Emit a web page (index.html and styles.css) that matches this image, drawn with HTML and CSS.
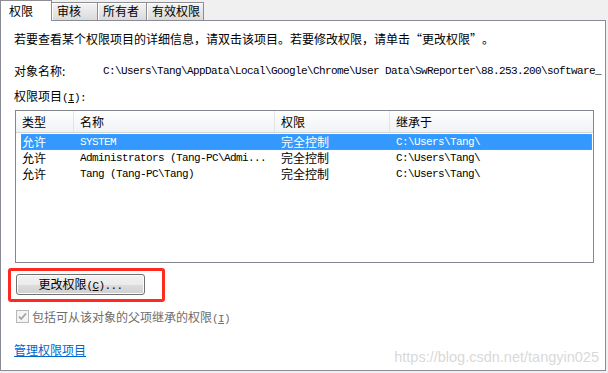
FILE: index.html
```html
<!DOCTYPE html>
<html lang="zh-CN">
<head>
  <meta charset="UTF-8" />
  <title>权限</title>
  <link rel="stylesheet" href="styles.css">
</head>
<body>
  <div class="tabs">
    <div class="tab active">权限</div>
    <div class="tab t-audit">审核</div>
    <div class="tab t-owner">所有者</div>
    <div class="tab t-eff">有效权限</div>
  </div>
  <div class="panel">
    <p class="intro">若要查看某个权限项目的详细信息，请双击该项目。若要修改权限，请单击<span class="q">“</span>更改权限<span class="q">”</span>。</p>
    <div class="objname">
      <span class="objlabel">对象名称:</span>
      <span class="mono path">C:\Users\Tang\AppData\Local\Google\Chrome\User Data\SwReporter\88.253.200\software_</span>
    </div>
    <div class="items-label">权限项目<span class="mono">(<u>I</u>):</span></div>

    <div class="listbox">
      <div class="lv-head">
        <div class="col">类型</div>
        <div class="col">名称</div>
        <div class="col">权限</div>
        <div class="col">继承于</div>
      </div>
      <div class="lv-row selected">
        <div class="cell first">允许</div>
        <div class="cell mono">SYSTEM</div>
        <div class="cell">完全控制</div>
        <div class="cell mono">C:\Users\Tang\</div>
      </div>
      <div class="lv-row">
        <div class="cell first">允许</div>
        <div class="cell mono">Administrators (Tang-PC\Admi...</div>
        <div class="cell">完全控制</div>
        <div class="cell mono">C:\Users\Tang\</div>
      </div>
      <div class="lv-row">
        <div class="cell first">允许</div>
        <div class="cell mono">Tang (Tang-PC\Tang)</div>
        <div class="cell">完全控制</div>
        <div class="cell mono">C:\Users\Tang\</div>
      </div>
    </div>

    <div class="highlight">
      <button class="btn">更改权限<span class="mono">(<u>C</u>)...</span></button>
    </div>

    <div class="inherit">
      <svg class="check" width="13" height="13" viewBox="0 0 13 13">
        <rect x="0.5" y="0.5" width="12" height="12" fill="#f4f4f4" stroke="#b8b8b8"/>
        <path d="M3 6.5 L5.2 9 L10 3.5" fill="none" stroke="#a2a2a2" stroke-width="1.8"/>
      </svg>
      <span>包括可从该对象的父项继承的权限<span class="mono">(<u>I</u>)</span></span>
    </div>

    <a class="manage" href="#">管理权限项目</a>

    <div class="watermark">https://blog.csdn.net/tangyin025</div>
  </div>
</body>
</html>
```

FILE: styles.css
```css
body {
  margin: 0;
  background: #f0f0f0;
  font-family: "Noto Sans CJK SC", sans-serif;
  font-size: 12px;
  color: #000;
}
u {
  text-decoration: underline;
}
.mono {
  font-family: "Liberation Mono", "Noto Sans CJK SC", monospace;
  font-size: 11px;
  letter-spacing: -0.6px;
}
.q {
  display: inline-block;
  width: 12px;
  text-align: center;
}

/* tabs */
.tabs {
  display: flex;
  align-items: flex-end;
  height: 20px;
}
.tab {
  box-sizing: border-box;
  height: 18px;
  line-height: 16px;
  padding-left: 5px;
  border: 1px solid #8c8e94;
  border-bottom: none;
  border-left: none;
  background: linear-gradient(#f4f4f4, #e6e6e6 55%, #dadada);
  box-shadow: inset 1px 1px 0 #ffffff;
}
.tab.active {
  position: relative;
  z-index: 1;
  height: 21px;
  margin-bottom: -1px;
  width: 52px;
  padding-left: 8px;
  line-height: 20px;
  border-left: 1px solid #898c95;
  background: #fff;
  box-shadow: none;
}
.t-audit { width: 46px; }
.t-owner { width: 49px; }
.t-eff { width: 57px; }

/* panel */
.panel {
  position: relative;
  box-sizing: border-box;
  width: 606px;
  height: 351px;
  border: 1px solid #898c95;
  background: #fff;
  padding: 0 0 0 13px;
  overflow: hidden;
}
.intro {
  margin: 0;
  padding-top: 10px;
  line-height: 16px;
  white-space: nowrap;
}
.objname {
  margin-top: 16px;
  line-height: 16px;
  white-space: nowrap;
  display: flex;
}
.objlabel {
  width: 89px;
  flex: none;
}
.items-label {
  margin-top: 9px;
  line-height: 16px;
}

/* list view */
.listbox {
  box-sizing: border-box;
  width: 579px;
  height: 153px;
  margin: 4px 0 0 1px;
  border: 1px solid #828790;
  background: #fff;
}
.lv-head {
  display: grid;
  grid-template-columns: 58px 201px 115px 1fr;
  height: 22px;
  background: linear-gradient(#ffffff, #f7f8f9 50%, #f1f2f4);
  border-bottom: 1px solid #d5d5d5;
  box-sizing: border-box;
}
.lv-head .col {
  padding-left: 6px;
  line-height: 21px;
  border-right: 1px solid #e3e4e6;
}
.lv-head .col:last-child {
  border-right: none;
}
.lv-row {
  display: grid;
  grid-template-columns: 53px 201px 115px 1fr;
  height: 16px;
  line-height: 16px;
  margin-left: 5px;
  margin-right: 1px;
  box-sizing: border-box;
  white-space: nowrap;
}
.lv-row .cell {
  padding-left: 6px;
  overflow: hidden;
}
.lv-row .cell.first {
  padding-left: 1px;
}
.lv-row.selected {
  margin-top: 1px;
  background: #3399ff;
  color: #fff;
  outline: 1px dotted #c8843a;
  outline-offset: -1px;
}

/* button with red annotation frame */
.highlight {
  box-sizing: border-box;
  width: 157px;
  height: 34px;
  margin: 5px 0 0 -6px;
  padding: 3px 0 0 5px;
  border: 3px solid #ff2a1f;
  border-radius: 3px;
}
.btn {
  display: block;
  box-sizing: border-box;
  width: 129px;
  height: 21px;
  padding: 0;
  border: 1px solid #707070;
  border-radius: 3px;
  background: linear-gradient(#f2f2f2, #ebebeb 50%, #dddddd 51%, #cfcfcf);
  box-shadow: inset 0 0 0 1px #fcfcfc;
  font-family: "Noto Sans CJK SC", sans-serif;
  font-size: 12px;
  color: #000;
  line-height: 18px;
}

.inherit {
  display: flex;
  align-items: center;
  gap: 3px;
  margin: 6px 0 0 2px;
  height: 16px;
  color: #6d6d6d;
}
.check {
  flex: none;
}

.manage {
  display: inline-block;
  margin-top: 18px;
  line-height: 16px;
  color: #0066cc;
  text-decoration: underline;
}

.watermark {
  position: absolute;
  right: 6px;
  bottom: 5px;
  font-family: "Liberation Sans", Arial, sans-serif;
  font-size: 14.5px;
  color: #d9d9d9;
}
```
